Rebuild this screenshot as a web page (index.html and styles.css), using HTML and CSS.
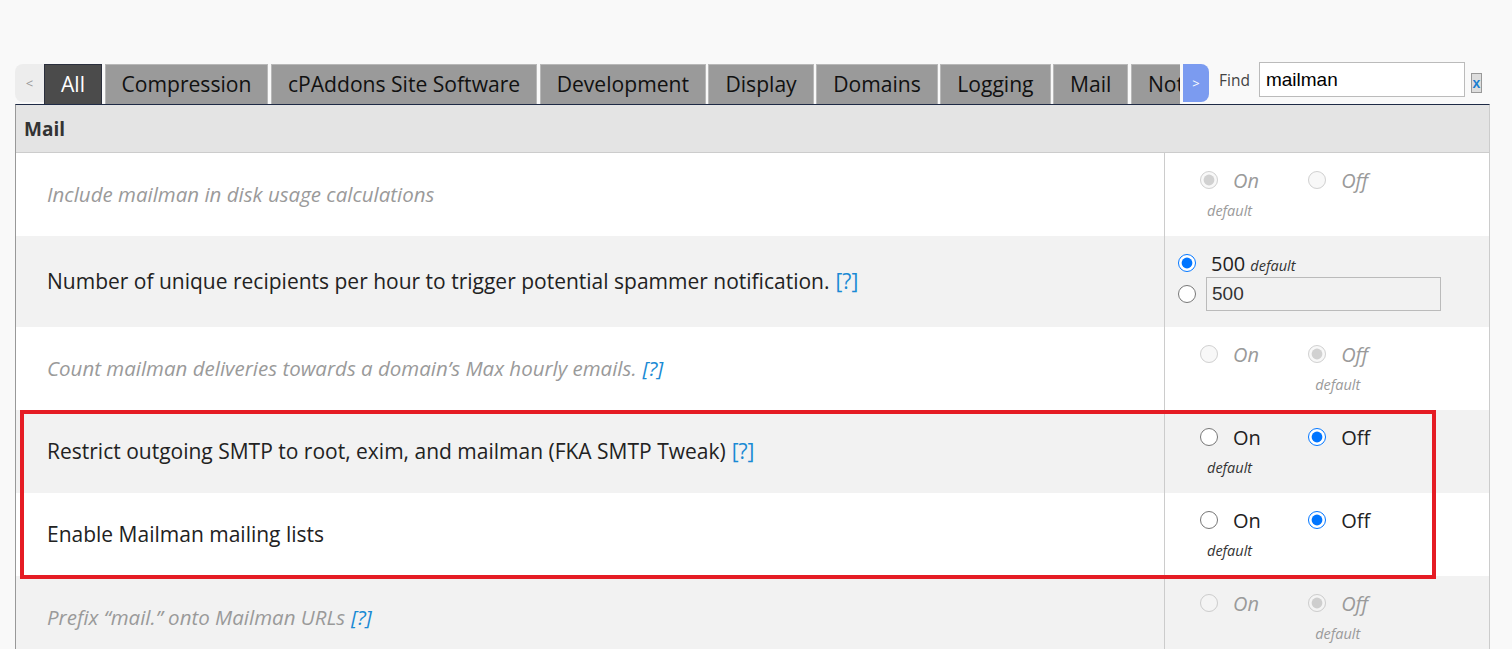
FILE: index.html
```html
<!DOCTYPE html>
<html lang="en">
<head>
    <meta charset="UTF-8">
    <title>Tweak Settings</title>
    <link rel="stylesheet" href="styles.css">
</head>
<body>
    <div class="toolbar">
        <button class="scroll-btn prev" type="button">&lt;</button>
        <div class="tabs">
            <a class="tab active">All</a>
            <a class="tab">Compression</a>
            <a class="tab">cPAddons Site Software</a>
            <a class="tab">Development</a>
            <a class="tab">Display</a>
            <a class="tab">Domains</a>
            <a class="tab">Logging</a>
            <a class="tab">Mail</a>
            <a class="tab">Notifications</a>
            <a class="tab">PHP</a>
        </div>
        <button class="scroll-btn next" type="button">&gt;</button>
        <div class="find">
            <label for="findBox">Find</label>
            <input type="text" id="findBox" value="mailman">
            <button class="clear" type="button">x</button>
        </div>
    </div>

    <div class="settings">
        <div class="group-head">Mail</div>

        <div class="row disabled">
            <div class="name">Include mailman in disk usage calculations</div>
            <div class="value">
                <div class="opt">
                    <label class="choice"><input type="radio" name="diskusage" checked disabled><span>On</span></label>
                    <div class="dflt">default</div>
                </div>
                <div class="opt">
                    <label class="choice"><input type="radio" name="diskusage" disabled><span>Off</span></label>
                </div>
            </div>
        </div>

        <div class="row shade">
            <div class="name">Number of unique recipients per hour to trigger potential spammer notification.<a class="help">[?]</a></div>
            <div class="value custom">
                <label class="choice"><input type="radio" name="spammer" checked><span>500</span><em class="dflt-inline">default</em></label>
                <div class="choice other">
                    <input type="radio" name="spammer">
                    <input type="text" class="num" value="500">
                </div>
            </div>
        </div>

        <div class="row disabled">
            <div class="name">Count mailman deliveries towards a domain’s Max hourly emails.<a class="help">[?]</a></div>
            <div class="value">
                <div class="opt">
                    <label class="choice"><input type="radio" name="maxhourly" disabled><span>On</span></label>
                </div>
                <div class="opt">
                    <label class="choice"><input type="radio" name="maxhourly" checked disabled><span>Off</span></label>
                    <div class="dflt">default</div>
                </div>
            </div>
        </div>

        <div class="flagged">
            <div class="row shade">
                <div class="name">Restrict outgoing SMTP to root, exim, and mailman (FKA SMTP Tweak)<a class="help">[?]</a></div>
                <div class="value">
                    <div class="opt">
                        <label class="choice"><input type="radio" name="smtptweak"><span>On</span></label>
                        <div class="dflt">default</div>
                    </div>
                    <div class="opt">
                        <label class="choice"><input type="radio" name="smtptweak" checked><span>Off</span></label>
                    </div>
                </div>
            </div>

            <div class="row">
                <div class="name">Enable Mailman mailing lists</div>
                <div class="value">
                    <div class="opt">
                        <label class="choice"><input type="radio" name="mailman"><span>On</span></label>
                        <div class="dflt">default</div>
                    </div>
                    <div class="opt">
                        <label class="choice"><input type="radio" name="mailman" checked><span>Off</span></label>
                    </div>
                </div>
            </div>
        </div>

        <div class="row shade disabled">
            <div class="name">Prefix “mail.” onto Mailman URLs<a class="help">[?]</a></div>
            <div class="value">
                <div class="opt">
                    <label class="choice"><input type="radio" name="prefix" disabled><span>On</span></label>
                </div>
                <div class="opt">
                    <label class="choice"><input type="radio" name="prefix" checked disabled><span>Off</span></label>
                    <div class="dflt">default</div>
                </div>
            </div>
        </div>
    </div>
</body>
</html>
```

FILE: styles.css
```css
body { margin: 0; padding: 62px 0 0 15px; background: #f9f9f9; font-family: "Open Sans", Arial, sans-serif; color: #222; }

/* tab strip */
.toolbar { display: flex; align-items: flex-end; height: 42px; }
.scroll-btn { flex: none; height: 38px; margin-bottom: 2px; border: none; font-family: "Open Sans", sans-serif; font-size: 13px; padding: 0; cursor: pointer; }
.scroll-btn.prev { width: 29px; background: #ededed; color: #999; border-radius: 8px 0 0 8px; }
.scroll-btn.next { width: 26px; margin-left: 3px; background: #7b9bf0; color: #fff; border-radius: 0 8px 8px 0; }
.tabs { display: flex; align-items: flex-end; width: 1136px; overflow: hidden; align-self: stretch; }
.tab { flex: none; box-sizing: border-box; height: 40px; line-height: 38px; padding: 0 16px; margin-right: 2.5px; background: #9a9a9a; border: 1px solid #b8b8b8; border-bottom: 0; font-size: 21.1px; color: #111; white-space: nowrap; cursor: pointer; }
.tab.active { background: #4b4b4b; border-color: #2b2f3d; color: #fff; }

.find { align-self: flex-start; display: flex; align-items: center; height: 35px; margin-left: 10px; }
.find label { font-size: 15.5px; color: #444; margin-right: 9px; }
.find input { box-sizing: border-box; width: 206px; height: 35px; border: 1px solid #bbb; padding: 0 6px; font-family: "Liberation Sans", Arial, sans-serif; font-size: 19px; color: #000; }
.clear { width: 11px; height: 20px; margin: 6px 0 0 6px; padding: 0; border: 1px solid #999; background: #ddd; color: #1a7fd0; font-family: "Liberation Sans", Arial, sans-serif; font-size: 14px; font-weight: bold; line-height: 16px; }

/* settings table */
.settings { box-sizing: border-box; width: 1475px; background: #fff; border-top: 1px solid #1e2a45; border-left: 1px solid #999; border-right: 1px solid #ccc; }
.group-head { height: 47px; line-height: 49px; padding-left: 8px; background: #e4e4e4; border-bottom: 1px solid #ccc; font-size: 19px; font-weight: bold; color: #333; }

.row { display: grid; grid-template-columns: 1148px 1fr; min-height: 83px; }
.row.shade { background: #f2f2f2; }
.name { display: flex; align-items: center; padding: 0 20px 2px 31px; font-size: 21px; color: #222; }
.value { border-left: 1px solid #ccc; padding: 15px 0 0 35px; }
.help { color: #1a8ad4; margin-left: 6px; cursor: pointer; }

.opt { display: inline-block; vertical-align: top; width: 104px; }
.choice { display: flex; align-items: center; height: 24px; font-size: 20px; color: #222; }
.choice input[type="radio"] { width: 18px; height: 18px; margin: 0 15px 0 0; flex: none; }
.dflt { margin: 9px 0 0 7px; font-size: 14.5px; font-style: italic; color: #333; line-height: 20px; }
.dflt-inline { font-size: 14.5px; color: #333; margin-left: 5px; position: relative; top: 2px; }

.disabled .name, .disabled .choice, .disabled .dflt { color: #9a9a9a; font-style: italic; }
.disabled .name { font-size: 20.5px; }

.value.custom { padding: 15px 0 16px 13px; }
.choice.other { height: 34px; margin-top: 2px; }
.choice.other input[type="radio"] { margin-right: 10px; }
.num { box-sizing: border-box; width: 235px; height: 34px; border: 1px solid #bbb; background: #f2f2f2; padding: 0 5px; font-family: "Liberation Sans", Arial, sans-serif; font-size: 19px; color: #333; }

/* annotation box round the two changed rows */
.flagged { position: relative; }
.flagged::after { content: ""; position: absolute; left: 4px; top: 0; width: 1416px; height: 169px; box-sizing: border-box; border: 4px solid #e51c24; pointer-events: none; }
```
